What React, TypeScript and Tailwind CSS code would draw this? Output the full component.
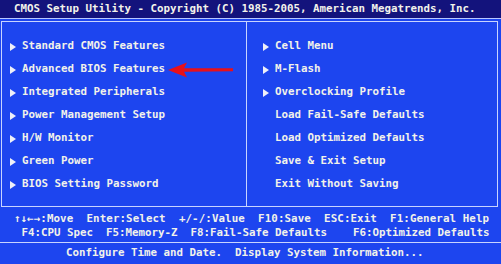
const left = [
  "Standard CMOS Features",
  "Advanced BIOS Features",
  "Integrated Peripherals",
  "Power Management Setup",
  "H/W Monitor",
  "Green Power",
  "BIOS Setting Password",
];

const right: [string, boolean][] = [
  ["Cell Menu", true],
  ["M-Flash", true],
  ["Overclocking Profile", true],
  ["Load Fail-Safe Defaults", false],
  ["Load Optimized Defaults", false],
  ["Save & Exit Setup", false],
  ["Exit Without Saving", false],
];

const Tri = () => (
  <span className="inline-block w-0 h-0 border-y-[4px] border-y-transparent border-l-[6px] border-l-[#eef0f8] mr-[6px]" />
);

export default function App() {
  return (
    <div
      className="relative w-[501px] h-[264px] overflow-hidden bg-[#1d45ef] text-[#f2f2ea] font-bold text-[10.8px] leading-none"
      style={{ fontFamily: '"DejaVu Sans Mono", "Liberation Mono", monospace' }}
    >
      {/* Title */}
      <div className="h-[18px] bg-[#13137c] flex items-center pl-[14px] whitespace-pre">
        CMOS Setup Utility - Copyright (C) 1985-2005, American Megatrends, Inc.
      </div>
      <div className="h-[3px] border-t border-[#b8c8ff]" />

      {/* Main menu box */}
      <div className="mx-[1px] w-[497px] h-[186px] border border-[#c8d4ff] flex">
        <div className="w-[245px] border-r border-[#c8d4ff] pt-[13px] pl-[8px] flex flex-col">
          {left.map((t) => (
            <div key={t} className="h-[23px] flex items-center whitespace-pre">
              <Tri />
              {t}
            </div>
          ))}
        </div>
        <div className="flex-1 pt-[13px] pl-[16px] flex flex-col">
          {right.map(([t, arrow]) => (
            <div key={t} className="h-[23px] flex items-center whitespace-pre">
              {arrow ? <Tri /> : <span className="inline-block w-[12px]" />}
              {t}
            </div>
          ))}
        </div>
      </div>

      {/* Help keys */}
      <div className="h-[36px] border-b border-[#c8d4ff] flex flex-col justify-center items-center gap-[3px] pt-[3px]">
        <div className="whitespace-pre tracking-[0.1px] pl-[2px]">↑↓←→:Move  Enter:Select  +/-/:Value  F10:Save  ESC:Exit  F1:General Help</div>
        <div className="whitespace-pre pl-[10px]">F4:CPU Spec  F5:Memory-Z  F8:Fail-Safe Defaults    F6:Optimized Defaults</div>
      </div>

      {/* Status */}
      <div className="h-[21px] flex items-center pl-[66px] whitespace-pre">
        Configure Time and Date.  Display System Information...
      </div>

      {/* Red arrow overlay */}
      <svg className="absolute left-[166px] top-[62px]" width="70" height="16" viewBox="0 0 70 16">
        <path d="M2 8 L21 0.5 L18 6.3 L67 6.3 L67 9.3 L18 9.7 L21 15.5 Z" fill="#e8101a" />
      </svg>
    </div>
  );
}
